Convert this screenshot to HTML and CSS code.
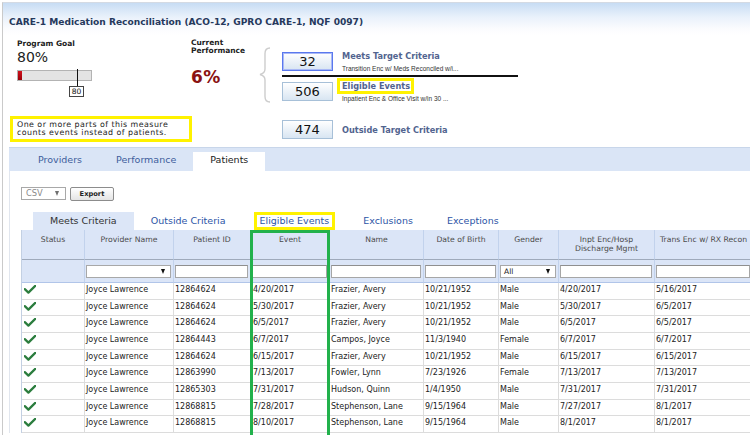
FILE: index.html
```html
<!DOCTYPE html>
<html>
<head>
<meta charset="utf-8">
<title>CARE-1 Medication Reconciliation</title>
<link rel="stylesheet" href="styles.css">
</head>
<body>
<div class="page">
  <h1 class="title">CARE-1 Medication Reconciliation (ACO-12, GPRO CARE-1, NQF 0097)</h1>

  <div class="summary">
    <div class="left-col">
      <div class="goal">
        <div class="lbl">Program Goal</div>
        <div class="goal-val">80%</div>
        <div class="gauge">
          <div class="gauge-fill"></div>
          <div class="marker"></div>
          <div class="marker-lbl">80</div>
        </div>
      </div>
      <div class="note"><div class="note-line">One or more parts of this measure</div><div class="note-line">counts events instead of patients.</div></div>
    </div>

    <div class="perf">
      <div class="lbl perf-lbl">Current<br>Performance</div>
      <div class="perf-val">6%</div>
    </div>

    <div class="criteria">
      <div class="crit-group">
        <svg class="brace" width="12" height="56" viewBox="0 0 12 56">
          <path d="M11 1 C7.5 1 6 2.5 6 6.5 L6 22 C6 25 4.5 26.6 1 27.5 C4.5 28.4 6 30 6 33 L6 49.5 C6 53.5 7.5 55 11 55" fill="none" stroke="#cdcdcd" stroke-width="1.4"/>
        </svg>
        <div class="crit-list">
          <div class="crit">
            <div class="count focused">32</div>
            <div class="crit-text">
              <div class="crit-name">Meets Target Criteria</div>
              <div class="crit-sub">Transition Enc w/ Meds Reconciled w/i...</div>
            </div>
          </div>
          <div class="rule"></div>
          <div class="crit">
            <div class="count">506</div>
            <div class="crit-text">
              <div class="crit-name hl">Eligible Events</div>
              <div class="crit-sub">Inpatient Enc &amp; Office Visit w/in 30 ...</div>
            </div>
          </div>
        </div>
      </div>
      <div class="crit outside">
        <div class="count">474</div>
        <div class="crit-text">
          <div class="crit-name">Outside Target Criteria</div>
        </div>
      </div>
    </div>
  </div>

  <div class="tabs">
    <div class="tab">Providers</div>
    <div class="tab">Performance</div>
    <div class="tab active">Patients</div>
  </div>

  <div class="panel">
    <div class="toolbar">
      <div class="select csv"><span class="sel-text">CSV</span><span class="arrow gray"></span></div>
      <div class="btn">Export</div>
    </div>

    <div class="subtabs">
      <div class="subtab active">Meets Criteria</div>
      <div class="subtab">Outside Criteria</div>
      <div class="subtab"><span class="hl-tab">Eligible Events</span></div>
      <div class="subtab">Exclusions</div>
      <div class="subtab">Exceptions</div>
    </div>

    <div class="grid-wrap">
      <table class="grid">
        <thead>
          <tr class="head">
            <th class="w-status">Status</th>
            <th class="w-prov">Provider Name</th>
            <th class="w-pid">Patient ID</th>
            <th class="w-event">Event</th>
            <th class="w-name">Name</th>
            <th class="w-dob">Date of Birth</th>
            <th class="w-gender">Gender</th>
            <th class="w-inpt">Inpt Enc/Hosp<br>Discharge Mgmt</th>
            <th class="w-trans">Trans Enc w/ RX Recon</th>
          </tr>
          <tr class="filters">
            <td></td>
            <td><div class="select f"><span class="sel-text"></span><span class="arrow"></span></div></td>
            <td><div class="f-input"></div></td>
            <td><div class="f-input"></div></td>
            <td><div class="f-input"></div></td>
            <td><div class="f-input"></div></td>
            <td><div class="select f"><span class="sel-text dark">All</span><span class="arrow"></span></div></td>
            <td><div class="f-input"></div></td>
            <td><div class="f-input"></div></td>
          </tr>
        </thead>
        <tbody>
          <tr><td><svg class="check" width="12" height="9" viewBox="0 0 12 9"><path d="M0.8 4.2 L4.4 7.6 L11.3 0.8" fill="none" stroke="#2b7d3e" stroke-width="2.3" stroke-linecap="round" stroke-linejoin="round"/></svg></td><td>Joyce Lawrence</td><td>12864624</td><td class="ev">4/20/2017</td><td>Frazier, Avery</td><td>10/21/1952</td><td>Male</td><td>4/20/2017</td><td>5/16/2017</td></tr>
          <tr><td><svg class="check" width="12" height="9" viewBox="0 0 12 9"><path d="M0.8 4.2 L4.4 7.6 L11.3 0.8" fill="none" stroke="#2b7d3e" stroke-width="2.3" stroke-linecap="round" stroke-linejoin="round"/></svg></td><td>Joyce Lawrence</td><td>12864624</td><td class="ev">5/30/2017</td><td>Frazier, Avery</td><td>10/21/1952</td><td>Male</td><td>5/30/2017</td><td>6/5/2017</td></tr>
          <tr><td><svg class="check" width="12" height="9" viewBox="0 0 12 9"><path d="M0.8 4.2 L4.4 7.6 L11.3 0.8" fill="none" stroke="#2b7d3e" stroke-width="2.3" stroke-linecap="round" stroke-linejoin="round"/></svg></td><td>Joyce Lawrence</td><td>12864624</td><td class="ev">6/5/2017</td><td>Frazier, Avery</td><td>10/21/1952</td><td>Male</td><td>6/5/2017</td><td>6/5/2017</td></tr>
          <tr><td><svg class="check" width="12" height="9" viewBox="0 0 12 9"><path d="M0.8 4.2 L4.4 7.6 L11.3 0.8" fill="none" stroke="#2b7d3e" stroke-width="2.3" stroke-linecap="round" stroke-linejoin="round"/></svg></td><td>Joyce Lawrence</td><td>12864443</td><td class="ev">6/7/2017</td><td>Campos, Joyce</td><td>11/3/1940</td><td>Female</td><td>6/7/2017</td><td>6/7/2017</td></tr>
          <tr><td><svg class="check" width="12" height="9" viewBox="0 0 12 9"><path d="M0.8 4.2 L4.4 7.6 L11.3 0.8" fill="none" stroke="#2b7d3e" stroke-width="2.3" stroke-linecap="round" stroke-linejoin="round"/></svg></td><td>Joyce Lawrence</td><td>12864624</td><td class="ev">6/15/2017</td><td>Frazier, Avery</td><td>10/21/1952</td><td>Male</td><td>6/15/2017</td><td>6/15/2017</td></tr>
          <tr><td><svg class="check" width="12" height="9" viewBox="0 0 12 9"><path d="M0.8 4.2 L4.4 7.6 L11.3 0.8" fill="none" stroke="#2b7d3e" stroke-width="2.3" stroke-linecap="round" stroke-linejoin="round"/></svg></td><td>Joyce Lawrence</td><td>12863990</td><td class="ev">7/13/2017</td><td>Fowler, Lynn</td><td>7/23/1926</td><td>Female</td><td>7/13/2017</td><td>7/13/2017</td></tr>
          <tr><td><svg class="check" width="12" height="9" viewBox="0 0 12 9"><path d="M0.8 4.2 L4.4 7.6 L11.3 0.8" fill="none" stroke="#2b7d3e" stroke-width="2.3" stroke-linecap="round" stroke-linejoin="round"/></svg></td><td>Joyce Lawrence</td><td>12865303</td><td class="ev">7/31/2017</td><td>Hudson, Quinn</td><td>1/4/1950</td><td>Male</td><td>7/31/2017</td><td>7/31/2017</td></tr>
          <tr><td><svg class="check" width="12" height="9" viewBox="0 0 12 9"><path d="M0.8 4.2 L4.4 7.6 L11.3 0.8" fill="none" stroke="#2b7d3e" stroke-width="2.3" stroke-linecap="round" stroke-linejoin="round"/></svg></td><td>Joyce Lawrence</td><td>12868815</td><td class="ev">7/28/2017</td><td>Stephenson, Lane</td><td>9/15/1964</td><td>Male</td><td>7/27/2017</td><td>8/1/2017</td></tr>
          <tr><td><svg class="check" width="12" height="9" viewBox="0 0 12 9"><path d="M0.8 4.2 L4.4 7.6 L11.3 0.8" fill="none" stroke="#2b7d3e" stroke-width="2.3" stroke-linecap="round" stroke-linejoin="round"/></svg></td><td>Joyce Lawrence</td><td>12868815</td><td class="ev">8/10/2017</td><td>Stephenson, Lane</td><td>9/15/1964</td><td>Male</td><td>8/1/2017</td><td>8/1/2017</td></tr>
        </tbody>
      </table>
      <div class="event-hl"></div>
    </div>
  </div>
</div>
</body>
</html>
```

FILE: styles.css
```css
html, body {
  margin: 0;
  padding: 0;
  height: 435px;
  overflow: hidden;
  background: #fff;
}
body {
  font-family: "DejaVu Sans", Verdana, sans-serif;
  color: #222;
}
.page {
  margin: 2px 0 0 2px;
  height: 433px;
  overflow: hidden;
  border-left: 1px solid #cacaca;
  border-top: 1px solid #d4dae3;
  background: linear-gradient(#c7dcf4 0, #e9f1fb 14px, #fbfcfe 26px, #fff 32px) no-repeat;
}
.title {
  margin: 0;
  padding: 13px 0 0 6px;
  font-size: 9.1px;
  line-height: 12px;
  font-weight: bold;
  color: #26395c;
}

/* summary */
.summary {
  display: flex;
  margin-top: 11px;
  padding-left: 7px;
}
.left-col { width: 181px; flex: none; }
.goal { padding-left: 7px; }
.lbl {
  font-size: 7.5px;
  line-height: 9px;
  font-weight: bold;
  color: #222;
}
.goal-val {
  font-size: 14px;
  line-height: 15px;
  margin-top: 2px;
  color: #222;
}
.gauge {
  position: relative;
  width: 75px;
  height: 11px;
  margin-top: 5px;
  box-sizing: border-box;
  border: 1px solid #b3b3b3;
  background: #e3e3e3;
}
.gauge-fill {
  width: 4px;
  height: 100%;
  background: linear-gradient(#d0101c, #9c0008);
}
.marker {
  position: absolute;
  left: 59px;
  top: -2px;
  width: 1px;
  height: 17px;
  background: #111;
}
.marker-lbl {
  position: absolute;
  left: 51px;
  top: 15px;
  width: 15px;
  height: 11px;
  box-sizing: border-box;
  border: 1px solid #444;
  background: #fff;
  font-size: 7.5px;
  line-height: 9px;
  text-align: center;
  color: #111;
}
.note {
  margin-top: 35px;
  width: 182px;
  height: 26px;
  box-sizing: border-box;
  border: 3px solid #fff200;
  padding: 2px 4px 0;
  color: #222;
  white-space: nowrap;
}
.note-line {
  font-size: 7.9px;
  line-height: 8.5px;
  height: 8px;
  letter-spacing: 0.45px;
}
.perf { width: 67px; flex: none; }
.perf-lbl { line-height: 7.5px; }
.perf-val {
  margin-top: 13px;
  font-size: 17px;
  line-height: 20px;
  font-weight: bold;
  letter-spacing: 0.5px;
  color: #8a1212;
}
.criteria { flex: none; padding-top: 8px; }
.crit-group { display: flex; align-items: flex-start; }
.brace { flex: none; margin-left: 1px; display: block; }
.crit-list { margin-left: 11px; margin-top: 5px; width: 236px; }
.crit { display: flex; align-items: flex-start; }
.count {
  flex: none;
  width: 51px;
  height: 19px;
  box-sizing: border-box;
  border: 1px solid #a7c0d8;
  background: linear-gradient(#ffffff, #d8e5f2);
  font-size: 13px;
  line-height: 17px;
  text-align: center;
  color: #111;
}
.count.focused {
  border-color: #5a78ee;
  box-shadow: inset 0 0 0 1px #a9b9f6;
}
.crit-text { margin-left: 9px; margin-top: -1px; }
.crit-name {
  font-size: 8.2px;
  line-height: 10px;
  font-weight: bold;
  color: #52648f;
  white-space: nowrap;
}
.crit-name.hl {
  width: max-content;
  border: 3px solid #fff200;
  padding: 0 1px 0 2px;
  margin: -3px 0 -3px -5px;
}
.crit-sub {
  margin-top: 3px;
  font-family: "Liberation Sans", Arial, sans-serif;
  font-size: 6.5px;
  line-height: 9px;
  color: #333;
  white-space: nowrap;
}
.rule {
  height: 2px;
  background: #111;
  margin: 2px 0 5px;
}
.crit.outside {
  margin: 17px 0 0 24px;
  align-items: center;
}
.crit.outside .crit-text { margin-top: 0; }

/* main tabs */
.tabs {
  display: flex;
  margin: 5px 0 0 6px;
  padding: 4px 0 0 12px;
  height: 19px;
  border-top: 1px solid #c8d6ea;
  background: #dae5f6;
}
.tab {
  padding: 0 17px 3px;
  font-size: 9.5px;
  line-height: 16px;
  color: #3e5e9c;
}
.tab.active { background: #fff; color: #222; }

/* panel */
.panel {
  margin-left: 6px;
  padding: 16px 0 0 11px;
  border-left: 1px solid #e1e6ee;
}
.toolbar { display: flex; gap: 4px; height: 14px; }
.select {
  display: flex;
  align-items: center;
  justify-content: space-between;
  box-sizing: border-box;
  border: 1px solid #a8a8a8;
  background: #fff;
}
.select.csv {
  width: 45px;
  height: 13px;
  padding: 0 6px 0 4px;
}
.sel-text {
  font-size: 8.3px;
  line-height: 11px;
  color: #8a8a8a;
}
.sel-text.dark { color: #111; font-size: 7.5px; }
.arrow {
  width: 0;
  height: 0;
  border-left: 2.5px solid transparent;
  border-right: 2.5px solid transparent;
  border-top: 5px solid #111;
}
.arrow.gray { border-top-color: #707070; }
.btn {
  width: 44px;
  height: 14px;
  box-sizing: border-box;
  border: 1px solid #8c8c8c;
  border-radius: 2px;
  background: linear-gradient(#ffffff, #e4e4e4);
  font-size: 6.7px;
  font-weight: bold;
  line-height: 12px;
  text-align: center;
  color: #222;
}
.subtabs {
  display: flex;
  margin: 11px 0 0 12px;
  height: 18px;
}
.subtab {
  padding: 0 17px 1px;
  font-size: 9.5px;
  line-height: 17px;
  color: #2d55a6;
}
.subtab.active { background: #dce6f7; color: #333; }
.hl-tab {
  display: inline-block;
  border: 3px solid #fff200;
  padding: 0 3px;
  margin: -3px -6px;
  line-height: 12px;
}

/* grid */
.grid-wrap { position: relative; }
.grid {
  border-collapse: separate;
  border-spacing: 0;
  table-layout: fixed;
  width: 732px;
  border-left: 1px solid #c3d0e3;
  font-size: 8px;
}
.grid th {
  box-sizing: border-box;
  height: 30px;
  padding: 4.5px 1px 0;
  vertical-align: top;
  text-align: center;
  font-weight: normal;
  font-size: 7.7px;
  line-height: 9px;
  color: #4b4b4b;
  background: #dbe5f7;
  border-right: 1px solid #c2d2ec;
  border-bottom: 1px solid #9faabb;
}
.w-status { width: 63px; }
.w-prov { width: 89px; }
.w-pid { width: 77px; }
.w-event { width: 79px; }
.w-name { width: 94px; }
.w-dob { width: 75px; }
.w-gender { width: 60px; }
.w-inpt { width: 96px; }
.w-trans { width: 98px; white-space: nowrap; }
.filters td {
  height: 13px;
  padding: 5px 2px 4px 1px;
  vertical-align: top;
  background: #dbe5f7;
  border-right: 1px solid #c2d2ec;
  border-bottom: 1px solid #b1c5e9;
}
.f-input {
  height: 13px;
  box-sizing: border-box;
  border: 1px solid #a6a6a6;
  border-top-color: #8f8f8f;
  background: #fff;
}
.select.f {
  height: 13px;
  padding: 0 5px 0 3px;
}
.grid tbody td {
  padding: 0 2px 1.67px 1px;
  line-height: 14px;
  vertical-align: top;
  white-space: nowrap;
  overflow: hidden;
  color: #222;
  border-right: 1px solid #dcdcdc;
  border-bottom: 1px solid #dcdcdc;
}
.grid tbody td.ev { padding-left: 2px; }
.check { display: block; margin: 2px 0 0 1px; }
.event-hl {
  position: absolute;
  left: 229px;
  top: 0;
  width: 80px;
  height: 220px;
  box-sizing: border-box;
  border: 3px solid #22b14c;
  pointer-events: none;
}
```
